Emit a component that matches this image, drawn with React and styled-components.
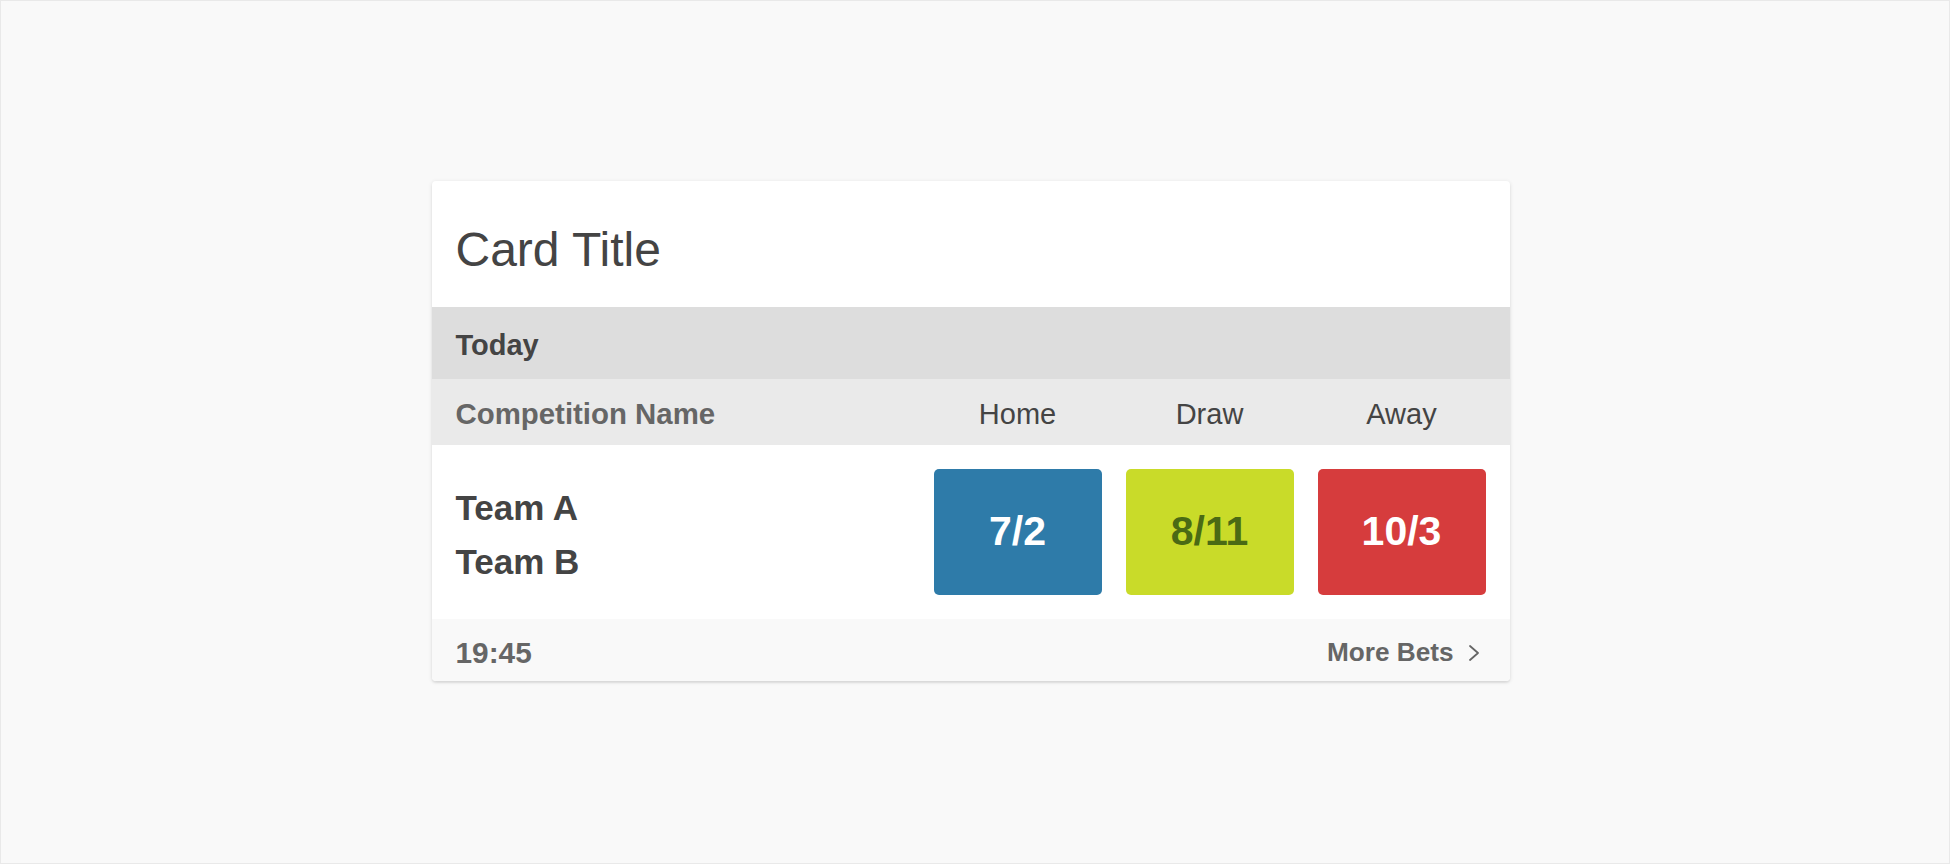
import React from "react";
import styled, { createGlobalStyle } from "styled-components";

const GlobalStyle = createGlobalStyle`
  html, body {
    margin: 0;
    padding: 0;
    background: #f9f9f9;
  }
  * { box-sizing: border-box; }
  body {
    font-family: "Liberation Sans", Arial, Helvetica, sans-serif;
  }
`;

const Page = styled.div`
  height: 864px;
  border: 1px solid #e9e9e9;
  background: #f9f9f9;
  display: flex;
  align-items: center;
  justify-content: center;
  padding: 0 9px 3px 0;
`;

const Card = styled.section`
  width: 1078px;
  background: #fff;
  border-radius: 4px;
  overflow: hidden;
  box-shadow: 0 1px 4px rgba(0, 0, 0, 0.12), 0 2px 2px rgba(0, 0, 0, 0.06);
  color: #444;
`;

const TitleBar = styled.header`
  height: 126px;
  padding: 42px 24px 0;
`;

const Title = styled.h2`
  margin: 0;
  font-size: 48px;
  font-weight: 400;
  line-height: 54px;
  color: #444;
`;

const DayBar = styled.div`
  height: 72px;
  padding: 4px 24px 0;
  background: #dddddd;
  font-size: 29px;
  font-weight: 700;
  line-height: 68px;
  color: #444;
`;

const Grid = styled.div`
  display: grid;
  grid-template-columns: 1fr repeat(3, 168px);
  column-gap: 24px;
  padding: 0 24px;
  align-items: center;
`;

const HeadRow = styled(Grid)`
  height: 66px;
  padding-top: 4px;
  background: #eaeaea;
  font-size: 29px;
  line-height: 62px;
`;

const Competition = styled.div`
  font-size: 29.4px;
  font-weight: 700;
  color: #666;
`;

const ColLabel = styled.div`
  text-align: center;
  color: #444;
  font-weight: 400;
`;

const EventRow = styled(Grid)`
  padding-top: 24px;
  padding-bottom: 24px;
  background: #fff;
`;

const Teams = styled.div`
  display: flex;
  flex-direction: column;
  padding-top: 6px;
  font-size: 35px;
  font-weight: 700;
  line-height: 54px;
  color: #444;
`;

const OddsButton = styled.button`
  height: 126px;
  border: 0;
  border-radius: 5px;
  padding: 0;
  display: flex;
  align-items: center;
  justify-content: center;
  font-family: "Liberation Sans", Arial, Helvetica, sans-serif;
  font-size: 41px;
  font-weight: 700;
  cursor: pointer;
  background: ${(p) => p.$bg};
  color: ${(p) => p.$fg};
`;

const Footer = styled.footer`
  height: 62px;
  padding: 6px 31px 0 24px;
  background: #f9f9f9;
  display: flex;
  align-items: center;
  justify-content: space-between;
  color: #666;
  font-weight: 700;
`;

const Time = styled.span`
  font-size: 29.8px;
`;

const MoreLink = styled.a`
  display: flex;
  align-items: center;
  gap: 15px;
  font-size: 26.2px;
  color: #666;
  text-decoration: none;
  cursor: pointer;
`;

const Chevron = () => (
  <svg width="10" height="16" viewBox="0 0 10 16" aria-hidden="true">
    <polyline
      points="1,1 9,8 1,15"
      fill="none"
      stroke="#666"
      strokeWidth="1.8"
      strokeLinecap="round"
      strokeLinejoin="round"
    />
  </svg>
);

const odds = [
  { label: "Home", value: "7/2", bg: "#2e7ba9", fg: "#ffffff" },
  { label: "Draw", value: "8/11", bg: "#c9db29", fg: "#4a6a14" },
  { label: "Away", value: "10/3", bg: "#d63c3d", fg: "#ffffff" },
];

export default function App() {
  return (
    <>
      <GlobalStyle />
      <Page>
        <Card>
          <TitleBar>
            <Title>Card Title</Title>
          </TitleBar>
          <DayBar>Today</DayBar>
          <HeadRow>
            <Competition>Competition Name</Competition>
            {odds.map((o) => (
              <ColLabel key={o.label}>{o.label}</ColLabel>
            ))}
          </HeadRow>
          <EventRow>
            <Teams>
              <span>Team A</span>
              <span>Team B</span>
            </Teams>
            {odds.map((o) => (
              <OddsButton key={o.label} $bg={o.bg} $fg={o.fg}>
                {o.value}
              </OddsButton>
            ))}
          </EventRow>
          <Footer>
            <Time>19:45</Time>
            <MoreLink>
              More Bets
              <Chevron />
            </MoreLink>
          </Footer>
        </Card>
      </Page>
    </>
  );
}
